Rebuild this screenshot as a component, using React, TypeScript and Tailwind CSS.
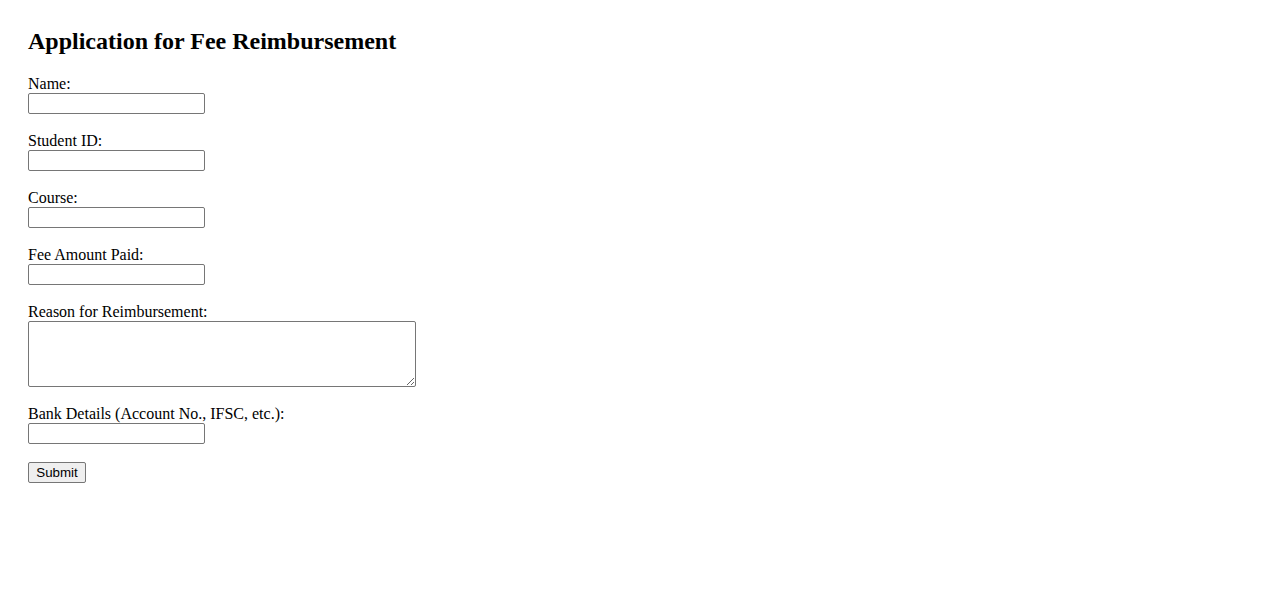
import React from "react";

const fields = ["Name:", "Student ID:", "Course:", "Fee Amount Paid:"];

export default function App() {
  const inputCls =
    "block w-[177px] h-[21px] border border-[#767676] rounded-[2px] bg-white px-[2px] text-[13.33px] outline-none";
  return (
    <div
      className="min-h-screen bg-white text-black pl-[28px] pt-[27px]"
      style={{ fontFamily: '"Liberation Serif", "Times New Roman", serif' }}
    >
      <h2 className="text-[24px] leading-[28px] font-bold mb-[19px]">
        Application for Fee Reimbursement
      </h2>
      <form className="flex flex-col items-start" onSubmit={(e) => e.preventDefault()}>
        {fields.map((f) => (
          <div key={f} className="mb-[17px]">
            <label className="block text-[16px] leading-[19px]">{f}</label>
            <input type="text" className={inputCls} />
          </div>
        ))}
        <div className="mb-[17px]">
          <label className="block text-[16px] leading-[19px]">Reason for Reimbursement:</label>
          <textarea
            className="block w-[388px] h-[66px] border border-[#767676] rounded-[2px] bg-white p-[2px] text-[13.33px] outline-none"
            style={{ fontFamily: '"Liberation Mono", monospace' }}
          />
        </div>
        <div className="mb-[18px]">
          <label className="block text-[16px] leading-[19px]">Bank Details (Account No., IFSC, etc.):</label>
          <input type="text" className={inputCls} />
        </div>
        <button
          type="submit"
          className="w-[58px] h-[21px] border border-[#767676] rounded-[2px] bg-[#efefef] text-[13.33px] leading-[15px] text-black px-[6px] py-[1px]"
          style={{ fontFamily: '"Liberation Sans", Arial, sans-serif' }}
        >
          Submit
        </button>
      </form>
    </div>
  );
}
